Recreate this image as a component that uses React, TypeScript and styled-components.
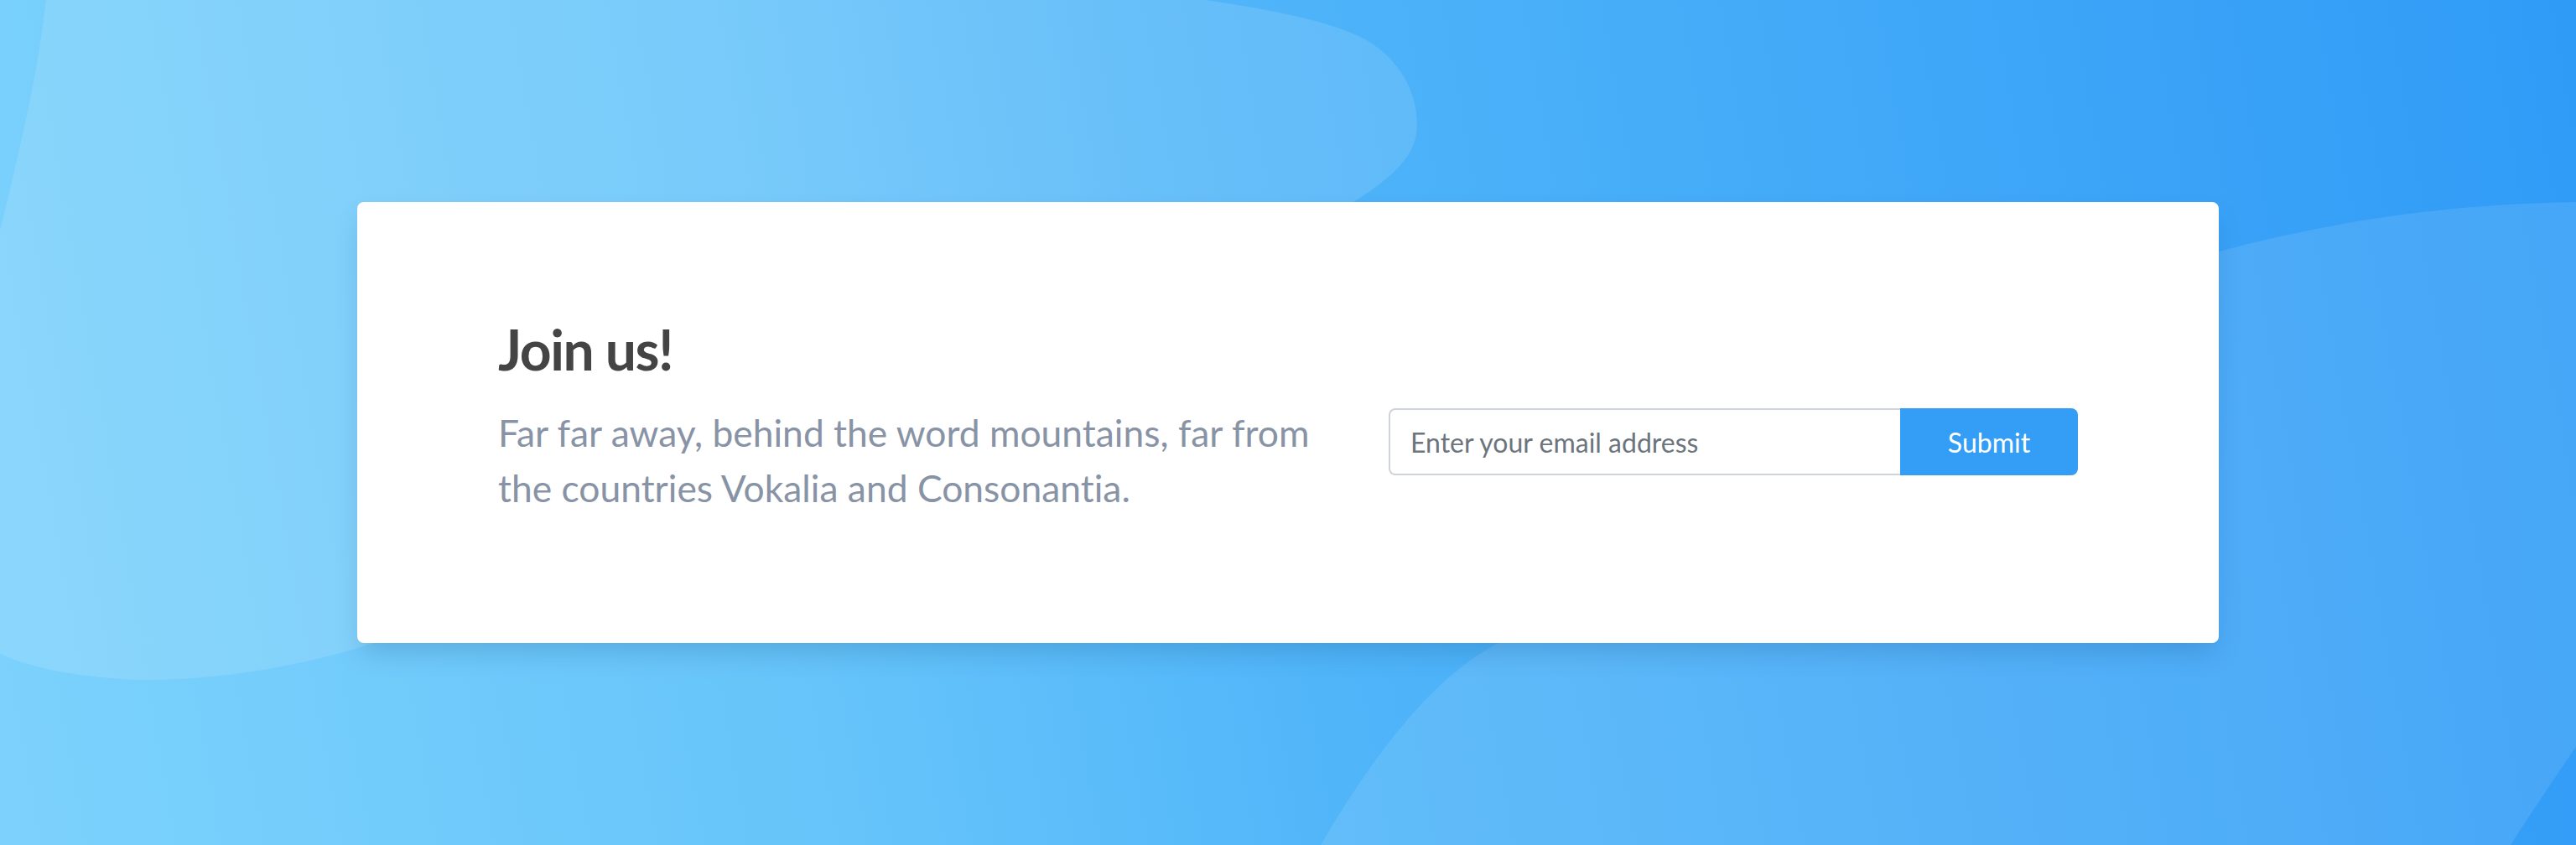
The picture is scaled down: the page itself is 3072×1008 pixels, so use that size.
import React from "react";
import styled, { createGlobalStyle } from "styled-components";

const GlobalStyle = createGlobalStyle`
  html, body {
    margin: 0;
    padding: 0;
  }
  body {
    font-family: Lato, "Open Sans", "Liberation Sans", sans-serif;
    font-variant-ligatures: none;
  }
  * { box-sizing: border-box; }
`;

const Page = styled.main`
  position: relative;
  min-height: 1008px;
  width: 100%;
  display: flex;
  align-items: center;
  justify-content: center;
  overflow: hidden;
  background: linear-gradient(80deg, #7cd2fc 0%, #66c4fa 31%, #50b5f9 50%, #309bf7 100%);
`;

const Backdrop = styled.svg`
  position: absolute;
  inset: 0;
  width: 100%;
  height: 100%;
  z-index: 0;
`;

const Card = styled.section`
  position: relative;
  z-index: 1;
  width: 2220px;
  height: 526px;
  background: #ffffff;
  border-radius: 8px;
  box-shadow: 0 16px 32px -6px rgba(20, 70, 120, 0.22);
  display: flex;
  align-items: center;
  padding: 0 168px;
`;

const Intro = styled.div`
  flex: 0 0 1010px;
  display: flex;
  flex-direction: column;
`;

const Title = styled.h2`
  margin: 0 0 26px;
  font-family: Lato, "Open Sans", sans-serif;
  font-weight: 700;
  font-size: 66px;
  letter-spacing: -1.5px;
  line-height: 1.2;
  color: #444444;
`;

const Lead = styled.p`
  margin: 0 0 16px;
  font-family: Lato, "Open Sans", sans-serif;
  font-weight: 400;
  font-size: 44.4px;
  line-height: 66px;
  color: #8893a5;
  font-variant-ligatures: none;
`;

const Form = styled.form`
  margin-left: auto;
  margin-top: 46px;
  width: 822px;
  display: flex;
  align-items: stretch;
  height: 80px;
`;

const EmailInput = styled.input`
  flex: 1 1 auto;
  min-width: 0;
  height: 100%;
  padding: 0 24px;
  border: 2px solid #ced4da;
  border-right: none;
  border-radius: 8px 0 0 8px;
  font-family: Lato, "Open Sans", sans-serif;
  font-size: 32px;
  color: #495057;
  background: #fff;
  outline: none;
  &::placeholder {
    color: #6c757d;
    opacity: 1;
  }
`;

const SubmitButton = styled.button`
  flex: 0 0 212px;
  height: 100%;
  border: none;
  border-radius: 0 8px 8px 0;
  background: #349ef6;
  color: #ffffff;
  font-family: Lato, "Open Sans", sans-serif;
  font-size: 32px;
  font-weight: 400;
  cursor: pointer;
`;

export default function App() {
  return (
    <>
      <GlobalStyle />
      <Page>
        <Backdrop viewBox="0 0 3072 1008" preserveAspectRatio="none" aria-hidden="true">
          <path
            d="M55,0 L1437,0 C1520,12 1590,26 1630,48 C1675,75 1694,120 1689,160 C1684,195 1645,222 1600,250 C1400,420 800,640 446,767 C360,795 260,812 166,811 C100,808 45,800 0,780 L0,275 C22,185 45,90 55,0 Z"
            fill="rgba(255,255,255,0.12)"
          />
          <path
            d="M1575,1008 C1650,880 1720,800 1791,765 C2100,520 2400,340 2646,300 C2780,264 2920,243 3072,241 L3072,891 C3045,930 3015,975 2994,1008 Z"
            fill="rgba(255,255,255,0.1)"
          />
        </Backdrop>
        <Card>
          <Intro>
            <Title>Join us!</Title>
            <Lead>
              Far far away, behind the word mountains, far from the countries Vokalia and Consonantia.
            </Lead>
          </Intro>
          <Form onSubmit={(e) => e.preventDefault()}>
            <EmailInput type="email" placeholder="Enter your email address" />
            <SubmitButton type="submit">Submit</SubmitButton>
          </Form>
        </Card>
      </Page>
    </>
  );
}
